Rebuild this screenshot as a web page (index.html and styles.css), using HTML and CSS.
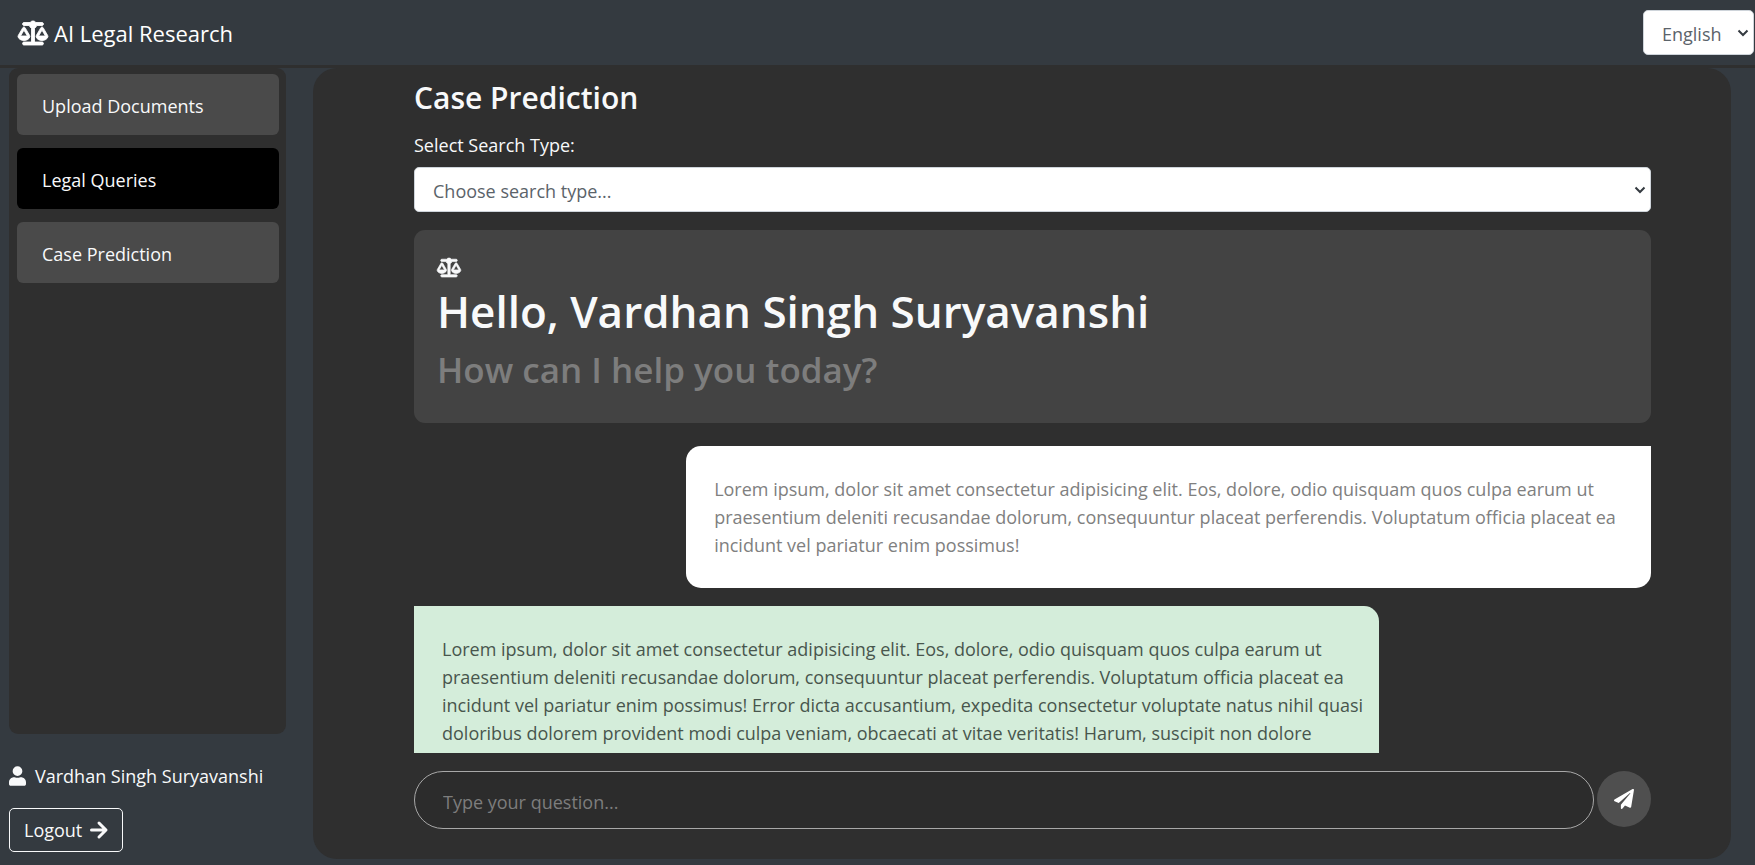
FILE: index.html
```html
<!DOCTYPE html>
<html lang="en">
<head>
<meta charset="utf-8">
<title>AI Legal Research</title>
<link rel="stylesheet" href="styles.css">
</head>
<body>
<svg class="sprite" aria-hidden="true">
  <symbol id="scale" viewBox="0 0 640 512"><path stroke="currentColor" stroke-width="18" d="M384 32H512c17.700 0 32 14.300 32 32s-14.300 32-32 32H398.400c-5.200 25.800-22.900 47.100-46.400 57.300V448H512c17.700 0 32 14.300 32 32s-14.300 32-32 32H128c-17.700 0-32-14.300-32-32s14.300-32 32-32H288V153.300c-23.500-10.300-41.200-31.600-46.400-57.300H128c-17.700 0-32-14.300-32-32s14.300-32 32-32H256c14.600-19.400 37.800-32 64-32s49.400 12.600 64 32zm55.600 288H584.400L512 195.800 439.600 320zM512 416c-62.900 0-115.200-34-126-78.900c-2.600-11 1-22.300 6.700-32.100l95.200-163.200c5-8.600 14.200-13.800 24.100-13.800s19.100 5.300 24.100 13.800l95.200 163.200c5.700 9.800 9.300 21.100 6.700 32.100C627.200 382 574.900 416 512 416zM126.800 195.800L54.400 320H199.300L126.800 195.800zM.9 337.100c-2.600-11 1-22.300 6.700-32.100l95.200-163.200c5-8.600 14.200-13.800 24.100-13.800s19.100 5.300 24.100 13.800l95.200 163.200c5.700 9.800 9.300 21.100 6.700 32.100C242 382 189.700 416 126.800 416S11.700 382 .9 337.100z"/></symbol>
</svg>
<header class="topbar">
  <a class="brand" href="#"><svg class="brand-icon" aria-hidden="true"><use href="#scale"/></svg>AI Legal Research</a>
  <select class="field lang" aria-label="Language"><option>English</option></select>
</header>
<div class="layout">
  <aside class="sidebar">
    <nav class="menu">
      <button class="menu-item" type="button">Upload Documents</button>
      <button class="menu-item active" type="button">Legal Queries</button>
      <button class="menu-item" type="button">Case Prediction</button>
    </nav>
    <div class="user"><svg class="user-icon" viewBox="0 0 448 512" aria-hidden="true"><path d="M224 256a128 128 0 1 0 0-256 128 128 0 0 0 0 256zm90 32h-17a174 174 0 0 1-146 0h-17C60 288 0 348 0 422v42c0 27 21 48 48 48h352c27 0 48-21 48-48v-42c0-74-60-134-134-134z"/></svg>Vardhan Singh Suryavanshi</div>
    <button class="logout" type="button">Logout<svg class="arrow-icon" viewBox="0 0 18 18" aria-hidden="true"><path d="M1.500 9h14M9 2l7 7-7 7"/></svg></button>
  </aside>
  <main class="panel">
    <h2 class="title">Case Prediction</h2>
    <label class="label" for="search-type">Select Search Type:</label>
    <select class="field" id="search-type"><option>Choose search type...</option></select>
    <div class="chat">
      <section class="welcome">
        <svg class="welcome-icon" aria-hidden="true"><use href="#scale"/></svg>
        <h1 class="hello">Hello, Vardhan Singh Suryavanshi</h1>
        <p class="help">How can I help you today?</p>
      </section>
      <p class="bubble sent">Lorem ipsum, dolor sit amet consectetur adipisicing elit. Eos, dolore, odio quisquam quos culpa earum ut praesentium deleniti recusandae dolorum, consequuntur placeat perferendis. Voluptatum officia placeat ea incidunt vel pariatur enim possimus!</p>
      <p class="bubble reply">Lorem ipsum, dolor sit amet consectetur adipisicing elit. Eos, dolore, odio quisquam quos culpa earum ut praesentium deleniti recusandae dolorum, consequuntur placeat perferendis. Voluptatum officia placeat ea incidunt vel pariatur enim possimus! Error dicta accusantium, expedita consectetur voluptate natus nihil quasi doloribus dolorem provident modi culpa veniam, obcaecati at vitae veritatis! Harum, suscipit non dolore</p>
    </div>
    <form class="ask">
      <input class="question" type="text" placeholder="Type your question..." aria-label="Question">
      <button class="send" type="button" aria-label="Send"><svg class="send-icon" viewBox="0 0 512 512" aria-hidden="true"><path d="M476 3 12 271c-18 10-16 36 2 43l107 45L408 105c5-5 13 2 8 8L176 406v80c0 24 28 33 42 16l63-78 125 53c14 6 31-3 33-19L511 28c4-20-17-34-35-25z"/></svg></button>
    </form>
  </main>
</div>
</body>
</html>
```
FILE: styles.css
```css
* { box-sizing: border-box; }
body {
  margin: 0;
  height: 100vh;
  display: flex;
  flex-direction: column;
  overflow: hidden;
  background: #343a40;
  color: #f8f9fa;
  font: 18px/28px "Segoe UI", "Open Sans", "Noto Sans", sans-serif;
}
button, input, select { font: inherit; color: inherit; }
svg { flex: none; fill: currentColor; overflow: visible; }
.sprite { position: absolute; width: 0; height: 0; overflow: hidden; }
.sprite symbol { overflow: visible; }

.topbar {
  flex: none;
  display: flex;
  align-items: center;
  justify-content: space-between;
  height: 68px;
  padding: 0 1px 0 18px;
  border-bottom: 3px solid #2f2f2f;
}
.brand {
  display: flex;
  align-items: center;
  gap: 6px;
  color: #fff;
  font-size: 22px;
  text-decoration: none;
}
.brand-icon { width: 30px; height: 24px; }

.field {
  appearance: none;
  width: 100%;
  height: 45px;
  padding: 2px 18px 0;
  border: 1px solid #ced4da;
  border-radius: 5px;
  color: #5b636a;
  background: #fff url("data:image/svg+xml,%3Csvg xmlns='http://www.w3.org/2000/svg' viewBox='0 0 12 8'%3E%3Cpath d='M1.500 1.500 6 6l4.500-4.500' fill='none' stroke='%23343a40' stroke-width='2'/%3E%3C/svg%3E") no-repeat right 4px center / 12px 8px;
}
.lang { width: 111px; }

.layout { flex: 1; min-height: 0; display: flex; }
.sidebar {
  flex: none;
  width: 286px;
  display: flex;
  flex-direction: column;
  align-items: flex-start;
  padding: 0 0 13px 9px;
}
.menu {
  flex: 1;
  align-self: stretch;
  display: flex;
  flex-direction: column;
  gap: 13px;
  padding: 6px 7px 6px 8px;
  border-radius: 9px;
  background: #2f2f2f;
}
.menu-item {
  height: 61px;
  padding: 2px 25px 0;
  border: 0;
  border-radius: 6px;
  background: #4a4a4a;
  text-align: left;
}
.menu-item.active { background: #000; }
.user {
  display: flex;
  align-items: center;
  gap: 9px;
  margin: 28px 0 18px;
}
.user-icon { width: 17px; height: 20px; }
.logout {
  display: flex;
  align-items: center;
  gap: 8px;
  height: 44px;
  padding: 0 14px;
  border: 1px solid #f8f9fa;
  border-radius: 5px;
  background: none;
}
.arrow-icon {
  width: 18px;
  height: 18px;
  fill: none;
  stroke: currentColor;
  stroke-width: 3;
  stroke-linecap: round;
  stroke-linejoin: round;
}

.panel {
  flex: 1;
  min-width: 0;
  display: flex;
  flex-direction: column;
  margin: 0 24px 6px 27px;
  padding: 10px 80px 30px 101px;
  border-radius: 24px;
  background: #2f2f2f;
}
.title { margin: 0 0 13px; font-size: 30px; line-height: 40px; font-weight: 600; }
.label { margin-bottom: 8px; }
.panel .field { flex: none; }
.chat {
  flex: 1;
  min-height: 0;
  overflow: hidden;
  display: flex;
  flex-direction: column;
  margin: 18px 0;
}
.chat > * { flex: none; }
.welcome {
  margin-bottom: 23px;
  padding: 28px 23px 30px;
  border-radius: 11px;
  background: #434343;
}
.welcome-icon { display: block; width: 24px; height: 19px; }
.hello { margin: 6px 0 8px; font-size: 44px; line-height: 56px; font-weight: 600; }
.help { margin: 0; color: #7d7d7d; font-size: 35px; line-height: 46px; font-weight: 600; }
.bubble {
  width: 78%;
  margin: 0 0 18px;
  padding: 29px 8px 29px 28px;
  border-radius: 15px;
}
.sent { align-self: flex-end; border-top-right-radius: 0; background: #fff; color: #808080; }
.reply { border-top-left-radius: 0; background: #d4edda; color: #48564d; }

.ask { flex: none; display: flex; align-items: flex-start; gap: 3px; }
.question {
  flex: 1;
  min-width: 0;
  height: 58px;
  padding: 3px 28px 0;
  border: 1px solid #a8a8a8;
  border-radius: 29px;
  background: #2c2c2c;
}
.question::placeholder { color: #7d7d7d; opacity: 1; }
.send {
  display: flex;
  align-items: center;
  justify-content: center;
  width: 54px;
  height: 56px;
  padding: 0;
  border: 0;
  border-radius: 50%;
  background: #4f4f4f;
  color: #fff;
}
.send-icon { width: 20px; height: 20px; }
```
